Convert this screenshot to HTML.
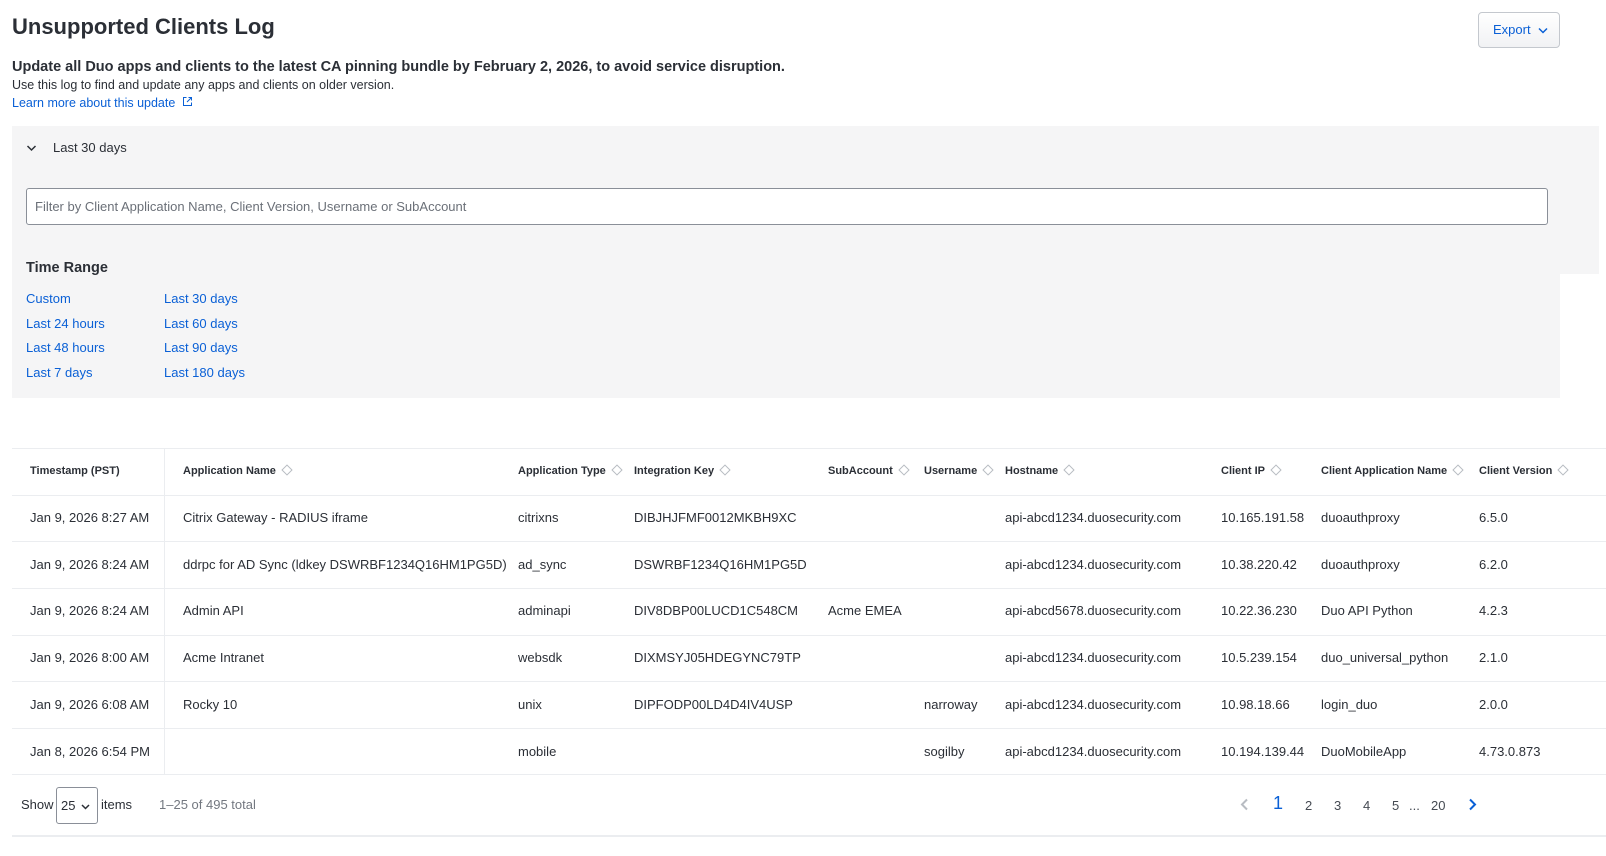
<!DOCTYPE html>
<html><head><style>
*{box-sizing:border-box;margin:0;padding:0}
body{width:1606px;height:856px;overflow:hidden;background:#fff;font-family:"Liberation Sans",sans-serif;color:#2b2f36;font-size:13px;position:relative}
.a{position:absolute;white-space:nowrap}
.blue{color:#0a60d6}
.panel{position:absolute;background:#f5f5f6}
.hd{font-size:11px;font-weight:bold;color:#2b2f36}
.sort{display:inline-block;width:8px;height:8px;border:1px solid #b8bcc2;transform:rotate(45deg);margin-left:7px;vertical-align:0px}
.line{position:absolute;left:12px;width:1594px;height:1px;background:#ebedf0}
.rows{top:495px;line-height:46.7px}
</style></head><body>
<div class="a" style="left:12px;top:14px;font-size:22px;font-weight:bold">Unsupported Clients Log</div>
<div class="a" style="left:1478px;top:12px;width:82px;height:36px;border:1px solid #c4c8ce;border-radius:4px;background:linear-gradient(#fff,#f1f2f4);color:#0a60d6;font-size:13px;line-height:34px;padding-left:14px">Export <svg width="10" height="7" viewBox="0 0 10 7" style="margin-left:4px"><path d="M1 1.5l4 4 4-4" stroke="#0a60d6" stroke-width="1.5" fill="none"/></svg></div>
<div class="a" style="left:12px;top:59px;font-size:14.5px;font-weight:bold">Update all Duo apps and clients to the latest CA pinning bundle by February 2, 2026, to avoid service disruption.</div>
<div class="a" style="left:12px;top:78px;font-size:12.5px">Use this log to find and update any apps and clients on older version.</div>
<div class="a blue" style="left:12px;top:96px;font-size:12.5px">Learn more about this update <svg width="11" height="11" viewBox="0 0 11 11" style="margin-left:3px"><path d="M4.5 1.5H1.5v8h8v-3M6.5 1.5h3v3M9.5 1.5L5 6" stroke="#0a60d6" fill="none"/></svg></div>
<div class="panel" style="left:12px;top:126px;width:1587px;height:148px"></div>
<div class="panel" style="left:12px;top:274px;width:1548px;height:124px"></div>
<svg class="a" style="left:26px;top:144px" width="11" height="8" viewBox="0 0 11 8"><path d="M1.5 2l4 4 4-4" stroke="#2b2f36" stroke-width="1.5" fill="none"/></svg>
<div class="a" style="left:53px;top:140px;font-size:13px">Last 30 days</div>
<div class="a" style="left:26px;top:188px;width:1522px;height:37px;background:#fff;border:1px solid #8a8f98;border-radius:3px;color:#6b7078;font-size:13px;line-height:35px;padding-left:8px">Filter by Client Application Name, Client Version, Username or SubAccount</div>
<div class="a" style="left:26px;top:260px;font-size:14.5px;font-weight:bold">Time Range</div>
<div class="a blue" style="left:26px;top:287px;line-height:24.7px;font-size:13px">Custom<br>Last 24 hours<br>Last 48 hours<br>Last 7 days</div>
<div class="a blue" style="left:164px;top:287px;line-height:24.7px;font-size:13px">Last 30 days<br>Last 60 days<br>Last 90 days<br>Last 180 days</div>

<div class="line" style="top:448px"></div>
<div class="line" style="top:495px"></div>
<div class="line" style="top:541px"></div>
<div class="line" style="top:588px"></div>
<div class="line" style="top:635px"></div>
<div class="line" style="top:681px"></div>
<div class="line" style="top:728px"></div>
<div class="line" style="top:774px"></div>
<div class="a" style="left:164px;top:448px;width:1px;height:326px;background:#ebedf0"></div>

<div class="a hd" style="left:30px;top:465px">Timestamp (PST)</div>
<div class="a hd" style="left:183px;top:465px">Application Name<span class="sort"></span></div>
<div class="a hd" style="left:518px;top:465px">Application Type<span class="sort"></span></div>
<div class="a hd" style="left:634px;top:465px">Integration Key<span class="sort"></span></div>
<div class="a hd" style="left:828px;top:465px">SubAccount<span class="sort"></span></div>
<div class="a hd" style="left:924px;top:465px">Username<span class="sort"></span></div>
<div class="a hd" style="left:1005px;top:465px">Hostname<span class="sort"></span></div>
<div class="a hd" style="left:1221px;top:465px">Client IP<span class="sort"></span></div>
<div class="a hd" style="left:1321px;top:465px">Client Application Name<span class="sort"></span></div>
<div class="a hd" style="left:1479px;top:465px">Client Version<span class="sort"></span></div>

<div class="a rows" style="left:30px">Jan 9, 2026 8:27 AM<br>Jan 9, 2026 8:24 AM<br>Jan 9, 2026 8:24 AM<br>Jan 9, 2026 8:00 AM<br>Jan 9, 2026 6:08 AM<br>Jan 8, 2026 6:54 PM</div>
<div class="a rows" style="left:183px">Citrix Gateway - RADIUS iframe<br>ddrpc for AD Sync (ldkey DSWRBF1234Q16HM1PG5D)<br>Admin API<br>Acme Intranet<br>Rocky 10<br>&nbsp;</div>
<div class="a rows" style="left:518px">citrixns<br>ad_sync<br>adminapi<br>websdk<br>unix<br>mobile</div>
<div class="a rows" style="left:634px">DIBJHJFMF0012MKBH9XC<br>DSWRBF1234Q16HM1PG5D<br>DIV8DBP00LUCD1C548CM<br>DIXMSYJ05HDEGYNC79TP<br>DIPFODP00LD4D4IV4USP<br>&nbsp;</div>
<div class="a rows" style="left:828px">&nbsp;<br>&nbsp;<br>Acme EMEA</div>
<div class="a rows" style="left:924px">&nbsp;<br>&nbsp;<br>&nbsp;<br>&nbsp;<br>narroway<br>sogilby</div>
<div class="a rows" style="left:1005px">api-abcd1234.duosecurity.com<br>api-abcd1234.duosecurity.com<br>api-abcd5678.duosecurity.com<br>api-abcd1234.duosecurity.com<br>api-abcd1234.duosecurity.com<br>api-abcd1234.duosecurity.com</div>
<div class="a rows" style="left:1221px">10.165.191.58<br>10.38.220.42<br>10.22.36.230<br>10.5.239.154<br>10.98.18.66<br>10.194.139.44</div>
<div class="a rows" style="left:1321px">duoauthproxy<br>duoauthproxy<br>Duo API Python<br>duo_universal_python<br>login_duo<br>DuoMobileApp</div>
<div class="a rows" style="left:1479px">6.5.0<br>6.2.0<br>4.2.3<br>2.1.0<br>2.0.0<br>4.73.0.873</div>

<div class="a" style="left:21px;top:797px">Show</div>
<div class="a" style="left:56px;top:787px;width:42px;height:37px;border:1px solid #8a8f98;border-radius:3px;line-height:35px;padding-left:4px">25 <svg width="9" height="6" viewBox="0 0 9 6" style="margin-left:2px"><path d="M1 1l3.5 3.5L8 1" stroke="#2b2f36" stroke-width="1.5" fill="none"/></svg></div>
<div class="a" style="left:101px;top:797px">items</div>
<div class="a" style="left:159px;top:797px;color:#737880">1–25 of 495 total</div>
<svg class="a" style="left:1240px;top:798px" width="9" height="13" viewBox="0 0 9 13"><path d="M7 1.5L2 6.5l5 5" stroke="#b8bcc2" stroke-width="2" fill="none"/></svg>
<div class="a blue" style="left:1273px;top:793px;font-size:18px">1</div>
<div class="a" style="left:1305px;top:798px;color:#454a52">2</div>
<div class="a" style="left:1334px;top:798px;color:#454a52">3</div>
<div class="a" style="left:1363px;top:798px;color:#454a52">4</div>
<div class="a" style="left:1392px;top:798px;color:#454a52">5</div>
<div class="a" style="left:1409px;top:798px;color:#454a52">...</div>
<div class="a" style="left:1431px;top:798px;color:#454a52">20</div>
<svg class="a" style="left:1468px;top:798px" width="9" height="13" viewBox="0 0 9 13"><path d="M2 1.5l5 5-5 5" stroke="#0a60d6" stroke-width="2" fill="none"/></svg>
<div class="line" style="top:835px;height:2px"></div>
</body></html>
